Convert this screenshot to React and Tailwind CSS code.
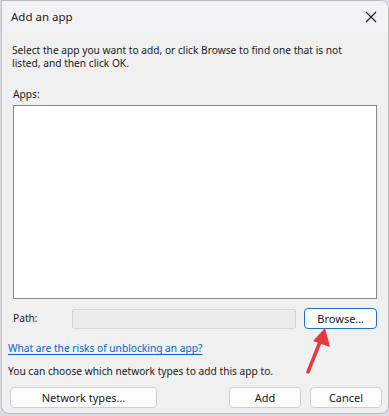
import React from 'react';

const font = { fontFamily: '"Segoe UI", "Noto Sans", "Open Sans", sans-serif' };

function WinButton({ children, className = '' }) {
    return (
        <button
            className={`h-[21px] rounded-[4px] border border-[#d0d0d0] bg-[#fdfdfd] text-[11px] text-[#1a1a1a] leading-none ${className}`}
        >
            {children}
        </button>
    );
}

export default function App() {
    return (
        <div className="w-[389px] h-[416px] bg-[#dcdde3] relative overflow-hidden" style={font}>
            {/* dialog window */}
            <div className="ml-[1px] w-[388px] h-[414px] bg-[#f0f0f0] border border-[#bdbdbd] rounded-b-[8px] rounded-tr-[8px] flex flex-col overflow-hidden">
                {/* title bar */}
                <div className="h-[31px] shrink-0 bg-[#f3f3f5] flex items-center justify-between pl-[9px] pr-[8px]">
                    <span className="text-[11.5px] text-[#1b1b1b]">Add an app</span>
                    <svg width="12" height="12" viewBox="0 0 12 12" className="mr-[3px] mt-[1px]">
                        <path d="M1 1 L11 11 M11 1 L1 11" stroke="#1b1b1b" strokeWidth="1.1" />
                    </svg>
                </div>

                {/* body */}
                <div className="flex-1 flex flex-col text-[10.2px] text-[#1a1a1a] leading-[13px]">
                    <p className="pl-[10px] pr-[30px] pt-[12px]">
                        Select the app you want to add, or click Browse to find one that is not listed, and then click OK.
                    </p>
                    <div className="pl-[11px] mt-[18px]">Apps:</div>
                    <div className="mx-[11px] mt-[4px] h-[194px] bg-white border border-[#8a8a8a]"></div>

                    <div className="flex items-center h-[21px] mt-[9px] pl-[11px] pr-[11px]">
                        <span className="w-[59px]">Path:</span>
                        <div className="w-[226px] h-[20px] bg-[#ececec] border border-[#d6d6d6] rounded-[2px]"></div>
                        <button className="ml-[8px] w-[73px] h-[21px] rounded-[4px] border-[1.5px] border-[#1f6fc9] bg-[#fdfdfd] text-[11px] leading-none">
                            Browse…
                        </button>
                    </div>

                    <a className="pl-[6px] mt-[13px] text-[#0066cc] underline underline-offset-[2px] decoration-[#0066cc]">
                        What are the risks of unblocking an app?
                    </a>
                    <p className="pl-[6px] mt-[10px]">You can choose which network types to add this app to.</p>

                    <div className="flex items-center mt-[9px] pl-[8px]">
                        <WinButton className="w-[147px]">Network types…</WinButton>
                        <WinButton className="w-[72px] ml-[72px]">Add</WinButton>
                        <WinButton className="w-[72px] ml-[9px]">Cancel</WinButton>
                    </div>
                </div>
            </div>

            {/* red annotation arrow */}
            <svg className="absolute left-0 top-0 pointer-events-none" width="389" height="416">
                <line x1="308" y1="372" x2="320" y2="342" stroke="#e8373d" strokeWidth="3.5" strokeLinecap="round" />
                <polygon points="325,328 330,347 313,341" fill="#e8373d" />
            </svg>
        </div>
    );
}
